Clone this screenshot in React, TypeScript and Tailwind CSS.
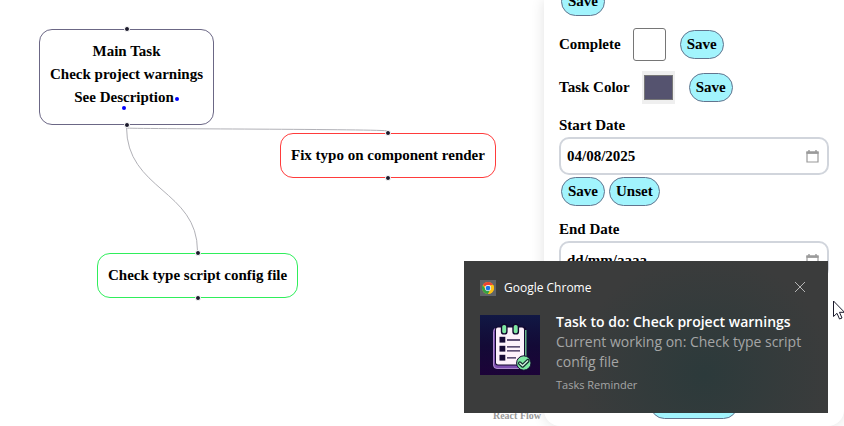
import type { ReactNode } from "react";

function Handle({ side }: { side: "top" | "bottom" }) {
  return (
    <span
      className={`absolute left-1/2 size-1.5 -translate-x-1/2 rounded-full border border-white bg-[#1a192b] ${
        side === "top" ? "-top-1" : "-bottom-1"
      }`}
    />
  );
}

function TaskNode({ place, children }: { place: string; children: ReactNode }) {
  return (
    <div
      className={`absolute rounded-[13px] border bg-white px-2.5 py-2.5 text-center whitespace-nowrap ${place}`}
    >
      <Handle side="top" />
      {children}
      <Handle side="bottom" />
    </div>
  );
}

function PillButton({ children }: { children: ReactNode }) {
  return (
    <button className="m-0.5 rounded-[15px] border border-slate-500 bg-cyan-200 px-1.5 py-0.5">
      {children}
    </button>
  );
}

function CalendarIcon() {
  return (
    <svg className="size-[13px] shrink-0" viewBox="0 0 13 13" fill="none" stroke="#9a9a9a">
      <path d="M1 2.200h11v9.800H1z" strokeWidth="1.2" />
      <path d="M.4 2.700h12.200" strokeWidth="2.400" />
      <path d="M3 0v2M10 0v2" strokeWidth="1.4" />
    </svg>
  );
}

function DateField({ id, label, value }: { id: string; label: string; value?: string }) {
  return (
    <div>
      <label htmlFor={id} className="block">
        {label}
      </label>
      <div className="flex h-[38px] items-center rounded-[10px] border-2 border-gray-300 bg-white pr-2 pl-1.5">
        <input
          id={id}
          type="text"
          defaultValue={value}
          placeholder="dd/mm/aaaa"
          className="min-w-0 flex-1 outline-none placeholder:text-black"
        />
        <CalendarIcon />
      </div>
    </div>
  );
}

function ChromeIcon() {
  return (
    <span className="flex size-4 items-center justify-center bg-[#5f6368]">
      <svg className="size-3" viewBox="0 0 48 48">
        <circle cx="24" cy="24" r="24" fill="#fbc116" />
        <path d="M24 24 3.2 12A24 24 0 0 1 44.8 12H24z" fill="#ea4335" />
        <path d="M3.2 12A24 24 0 0 0 24 48l10.4-18L24 24 13.6 30z" fill="#34a047" />
        <path d="M44.8 12H24v12l10.4 6L24 48A24 24 0 0 0 44.8 12z" fill="#fbc116" />
        <circle cx="24" cy="24" r="12" fill="#fff" />
        <circle cx="24" cy="24" r="9.5" fill="#1a73e8" />
      </svg>
    </span>
  );
}

function TaskPicture() {
  return (
    <svg className="size-[60px] shrink-0" viewBox="0 0 60 60">
      <defs>
        <linearGradient id="night" x1="0" y1="0" x2="0" y2="1">
          <stop offset="0" stopColor="#111844" />
          <stop offset="0.5" stopColor="#130a36" />
          <stop offset="1" stopColor="#1c0338" />
        </linearGradient>
      </defs>
      <rect width="60" height="60" fill="url(#night)" />
      <rect x="13.5" y="13" width="31" height="40.5" rx="3.5" fill="#7d4fb0" stroke="#c9a5e6" strokeWidth="0.8" />
      <rect x="15" y="11.5" width="31" height="39" rx="3" fill="#12082e" />
      <path d="M45.8 15v26" stroke="#7ee2a0" strokeWidth="1.2" />
      <rect x="16" y="12.5" width="28" height="37" rx="2" fill="#fdf1fb" />
      <g fill="#7ee8a2" stroke="#12082e" strokeWidth="1.4">
        <rect x="21.5" y="9.3" width="5.4" height="9.6" rx="2.5" />
        <rect x="33" y="9.3" width="5.4" height="9.6" rx="2.5" />
      </g>
      <g fill="#160a35">
        <rect x="19.5" y="21.8" width="5.8" height="5.8" />
        <rect x="19.5" y="30.8" width="5.8" height="5.8" />
        <rect x="19.5" y="39.8" width="5.8" height="5.8" />
      </g>
      <path d="M27 25h13M27 31.8h13M27 35.8h13M27 42.8h9" stroke="#2b1a49" strokeWidth="1.3" />
      <circle cx="43.8" cy="48" r="7.2" fill="#7ee8a2" stroke="#12082e" strokeWidth="1" />
      <path d="m39.8 48.2 2.8 2.6 5.2-5" fill="none" stroke="#12302e" strokeWidth="3.8" strokeLinecap="round" strokeLinejoin="round" />
      <path d="m39.8 48.2 2.8 2.6 5.2-5" fill="none" stroke="#d9fbe6" strokeWidth="1.2" strokeLinecap="round" strokeLinejoin="round" />
    </svg>
  );
}

function Flow() {
  return (
    <main className="relative min-w-0 flex-1">
      <svg className="absolute inset-0 size-full" fill="none" stroke="#b1b1b7">
        <path d="M126.5 127C126.5 190 197.5 190 197.5 251" />
        <path d="M126.5 128C126.5 129 387.5 129 387.5 131" />
      </svg>
      <TaskNode place="left-[39px] top-[29px] h-24 border-[#6b6785]">
        <p>Main Task</p>
        <p>Check project warnings</p>
        <p className="flex items-center justify-center gap-px leading-[22px]">
          See Description
          <span className="mt-1 size-1 rounded-full bg-[#00f]" />
        </p>
        <span className="absolute bottom-3.5 left-[82px] size-1 rounded-full bg-[#00f]" />
      </TaskNode>
      <TaskNode place="left-[280px] top-[133px] border-[#ff3b3b]">Fix typo on component render</TaskNode>
      <TaskNode place="left-[97px] top-[253px] border-[#2fee5b]">Check type script config file</TaskNode>
      <a
        href="#react-flow"
        className="absolute right-0 bottom-0 px-[3px] text-[10px] leading-5 text-[#999]"
      >
        React Flow
      </a>
    </main>
  );
}

function TaskPanel() {
  return (
    <aside className="relative flex w-[300px] shrink-0 flex-col overflow-hidden rounded-b-2xl bg-white px-[15px] pb-[7px] shadow-[0_0_14px_rgba(0,0,0,0.12)]">
      <div className="-mt-[15px]">
        <PillButton>Save</PillButton>
      </div>
      <div className="mt-2.5 flex items-center">
        <label htmlFor="complete">Complete</label>
        <input
          id="complete"
          type="checkbox"
          className="mr-3 ml-3 size-[33px] appearance-none rounded-[3px] border border-[#767676] bg-white"
        />
        <PillButton>Save</PillButton>
      </div>
      <div className="mt-2.5 flex items-center">
        <label htmlFor="color">Task Color</label>
        <input
          id="color"
          type="color"
          defaultValue="#55536f"
          className="mr-3 ml-3 size-[33px] bg-[#efefef]"
        />
        <PillButton>Save</PillButton>
      </div>
      <div className="mt-2.5">
        <DateField id="start" label="Start Date" value="04/08/2025" />
        <div className="flex">
          <PillButton>Save</PillButton>
          <PillButton>Unset</PillButton>
        </div>
      </div>
      <div className="mt-2.5">
        <DateField id="end" label="End Date" />
      </div>
      <button
        aria-label="Delete task"
        className="mt-auto h-[29px] w-[88px] self-center rounded-[15px] border border-slate-500 bg-cyan-200"
      />
    </aside>
  );
}

function Toast() {
  return (
    <section className="absolute right-4 bottom-[13px] h-[152px] w-[364px] bg-[#3b3c3c] bg-[radial-gradient(ellipse_130px_120px_at_66%_75%,#2c3a3b,#3b3c3c)] px-4 pt-[19px] font-['Open_Sans','Noto_Sans',sans-serif] font-normal text-[#a5a6a6]">
      <header className="flex h-4 items-center gap-2 text-[12px] leading-4 text-white">
        <ChromeIcon />
        <span className="flex-1">Google Chrome</span>
        <button aria-label="Close" className="mr-[7px] mb-0.5">
          <svg className="size-2.5" viewBox="0 0 10 10" stroke="#b5b5b5">
            <path d="m0 0 10 10M10 0 0 10" />
          </svg>
        </button>
      </header>
      <div className="mt-[19px] flex gap-4">
        <TaskPicture />
        <div className="-mt-[3px] text-[14px] leading-5">
          <h2 className="font-semibold whitespace-nowrap text-white">Task to do: Check project warnings</h2>
          <p>Current working on: Check type script config file</p>
          <p className="mt-[3px] text-[11px]">Tasks Reminder</p>
        </div>
      </div>
    </section>
  );
}

function Pointer() {
  return (
    <svg className="absolute top-[300px] right-0 h-5 w-[11px]" viewBox="0 0 11 20" fill="#fff" stroke="#1a192b">
      <path d="M.5 1v15.5l3.500-3.200 2.500 5.700 2.500-1-2.500-5.700h5z" />
    </svg>
  );
}

export default function App() {
  return (
    <div className="relative flex h-screen overflow-hidden bg-white font-['Liberation_Serif',serif] text-[15px] leading-[23px] font-bold text-black">
      <Flow />
      <TaskPanel />
      <Toast />
      <Pointer />
    </div>
  );
}
